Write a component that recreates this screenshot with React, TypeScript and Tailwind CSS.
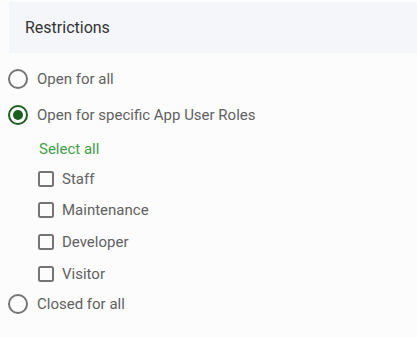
import React from "react";

function Radio({ checked }: { checked?: boolean }) {
  return (
    <svg width="22" height="22" viewBox="0 0 22 22" className="shrink-0">
      <circle cx="11" cy="11" r="9" fill="none" stroke={checked ? "#1b5e20" : "#757575"} strokeWidth="2" />
      {checked && <circle cx="11" cy="11" r="5" fill="#1b5e20" />}
    </svg>
  );
}

function Checkbox() {
  return (
    <svg width="16" height="16" viewBox="0 0 16 16" className="shrink-0">
      <rect x="1" y="1" width="14" height="14" rx="1.5" fill="none" stroke="#757575" strokeWidth="2" />
    </svg>
  );
}

export default function App() {
  const roles = ["Staff", "Maintenance", "Developer", "Visitor"];
  return (
    <div className="w-[417px] h-[337px] bg-[#fcfcfc] pt-[2px] font-['Roboto',sans-serif] overflow-hidden">
      <div className="ml-[9px] h-[51px] bg-[#f5f6fa] flex items-center pl-[16px] text-[16px] text-[#333333]">
        Restrictions
      </div>
      <div className="pt-[7px]">
        <div className="h-[38px] flex items-center pl-[7px] gap-[8px] text-[15px] text-[#616161]">
          <Radio />
          <span>Open for all</span>
        </div>
        <div className="h-[34px] flex items-center pl-[7px] gap-[8px] text-[15px] text-[#616161]">
          <Radio checked />
          <span>Open for specific App User Roles</span>
        </div>
        <div className="h-[31px] pt-[3px] flex items-center pl-[39px] text-[15px] text-[#43a047]">
          Select all
        </div>
        {roles.map((r) => (
          <div key={r} className="h-[31.67px] flex items-center pl-[38px] gap-[8px] text-[15px] text-[#616161]">
            <Checkbox />
            <span>{r}</span>
          </div>
        ))}
        <div className="h-[29px] flex items-center pl-[7px] gap-[8px] text-[15px] text-[#616161]">
          <Radio />
          <span>Closed for all</span>
        </div>
      </div>
    </div>
  );
}
